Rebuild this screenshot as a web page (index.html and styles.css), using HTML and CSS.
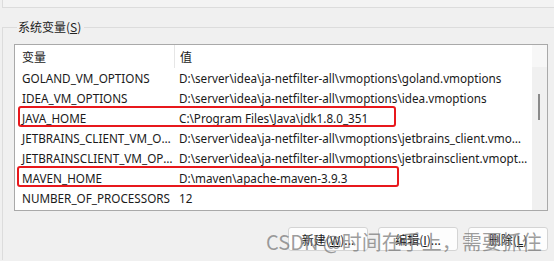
FILE: index.html
```html
<!DOCTYPE html>
<html lang="zh-CN">
<head>
    <meta charset="UTF-8">
    <title>系统变量</title>
    <link rel="stylesheet" href="styles.css">
</head>
<body>
    <!-- Bas du groupe précédent (variables utilisateur) -->
    <div class="top-strip"></div>

    <fieldset class="group">
        <legend>系统变量(<u>S</u>)</legend>

        <!-- Liste des variables -->
        <div class="listbox">
            <div class="list">
                <div class="list-head">
                    <div class="col-name">变量</div>
                    <div class="col-value">值</div>
                </div>
                <div class="list-row">
                    <div class="col-name">GOLAND_VM_OPTIONS</div>
                    <div class="col-value">D:\server\idea\ja-netfilter-all\vmoptions\goland.vmoptions</div>
                </div>
                <div class="list-row">
                    <div class="col-name">IDEA_VM_OPTIONS</div>
                    <div class="col-value">D:\server\idea\ja-netfilter-all\vmoptions\idea.vmoptions</div>
                </div>
                <div class="list-row">
                    <div class="col-name">JAVA_HOME</div>
                    <div class="col-value">C:\Program Files\Java\jdk1.8.0_351</div>
                </div>
                <div class="list-row">
                    <div class="col-name">JETBRAINS_CLIENT_VM_OPTIONS</div>
                    <div class="col-value">D:\server\idea\ja-netfilter-all\vmoptions\jetbrains_client.vmoptions</div>
                </div>
                <div class="list-row">
                    <div class="col-name">JETBRAINSCLIENT_VM_OPTIONS</div>
                    <div class="col-value">D:\server\idea\ja-netfilter-all\vmoptions\jetbrainsclient.vmoptions</div>
                </div>
                <div class="list-row">
                    <div class="col-name">MAVEN_HOME</div>
                    <div class="col-value">D:\maven\apache-maven-3.9.3</div>
                </div>
                <div class="list-row">
                    <div class="col-name">NUMBER_OF_PROCESSORS</div>
                    <div class="col-value">12</div>
                </div>
            </div>
            <div class="scrollbar">
                <div class="scroll-head"></div>
                <div class="scroll-thumb"></div>
            </div>
        </div>

        <!-- Boutons d'action -->
        <div class="actions">
            <button>新建(<u>W</u>)...</button>
            <button>编辑(<u>I</u>)...</button>
            <button>删除(<u>L</u>)</button>
        </div>
    </fieldset>

    <!-- Annotations rouges -->
    <div class="mark mark-java"></div>
    <div class="mark mark-maven"></div>

    <!-- Filigrane -->
    <div class="watermark">CSDN @时间在手上，需要抓住</div>
</body>
</html>
```

FILE: styles.css
```css
/* Page */
body {
    margin: 0;
    width: 554px;
    height: 261px;
    overflow: hidden;
    position: relative;
    background-color: #f0f0f0;
    font-family: "Noto Sans", "Noto Sans CJK SC", sans-serif;
    font-size: 11.7px;
    color: #1a1a1a;
}

/* Bande du haut */
.top-strip {
    height: 7px;
    margin-left: 2px;
    border-left: 1px solid #dcdcdc;
    border-bottom: 1px solid #dcdcdc;
    background-color: #f3f3f3;
}

/* Groupe "系统变量" */
.group {
    min-width: 0;
    margin: 11px 0 0 2px;
    padding: 0 6px 0 11px;
    border: none;
    border-top: 1px solid #dcdcdc;
    border-left: 1px solid #dcdcdc;
    height: 240px;
}

.group legend {
    margin-left: 3px;
    padding: 0 3px 0 1px;
    line-height: 16px;
    font-family: "Noto Sans CJK SC", sans-serif;
    font-size: 12px;
    color: #222;
}

/* Liste */
.listbox {
    display: flex;
    margin-top: 9px;
    height: 167px;
    box-sizing: border-box;
    border: 1px solid #a9a9a9;
    background-color: #fff;
}

.list {
    flex: 1;
    min-width: 0;
}

.list-head,
.list-row {
    display: flex;
    align-items: center;
}

.list-head {
    height: 23px;
}

.list-head .col-name {
    font-family: "Noto Sans CJK SC", sans-serif;
    font-size: 12px;
    border-right: 1px solid #e6e6e6;
    height: 23px;
    line-height: 23px;
}

.list-head .col-value {
    font-family: "Noto Sans CJK SC", sans-serif;
    font-size: 12px;
}

.list-row {
    height: 20px;
}

.col-name {
    width: 152px;
    padding-left: 7px;
    white-space: nowrap;
    overflow: hidden;
    text-overflow: ellipsis;
}

.col-value {
    flex: 1;
    min-width: 0;
    padding: 0 4px 0 5px;
    white-space: nowrap;
    overflow: hidden;
    text-overflow: ellipsis;
}

/* Barre de défilement */
.scrollbar {
    width: 15px;
    flex-shrink: 0;
    background-color: #f0f0f0;
    position: relative;
}

.scroll-head {
    height: 22px;
    background-color: #f7f7f7;
}

.scroll-thumb {
    position: absolute;
    left: 6px;
    top: 49px;
    width: 2px;
    height: 26px;
    background-color: #8a8a8a;
}

/* Boutons */
.actions {
    display: flex;
    justify-content: flex-end;
    gap: 10px;
    margin-top: 16px;
}

button {
    width: 80px;
    height: 24px;
    padding: 0;
    font-family: "Noto Sans CJK SC", sans-serif;
    font-size: 12px;
    color: #1a1a1a;
    background-color: #fdfdfd;
    border: 1px solid #d4d4d4;
    border-radius: 3px;
}

/* Encadrés rouges */
.mark {
    position: absolute;
    border: 2px solid #e8181c;
    border-radius: 3px;
}

.mark-java {
    left: 18px;
    top: 106px;
    width: 374px;
    height: 17px;
}

.mark-maven {
    left: 17px;
    top: 166px;
    width: 378px;
    height: 17px;
}

/* Filigrane */
.watermark {
    position: absolute;
    left: 266px;
    top: 229px;
    font-family: "Noto Sans CJK SC", sans-serif;
    font-size: 20px;
    line-height: 26px;
    color: rgba(120, 120, 120, 0.72);
    white-space: nowrap;
}
```
